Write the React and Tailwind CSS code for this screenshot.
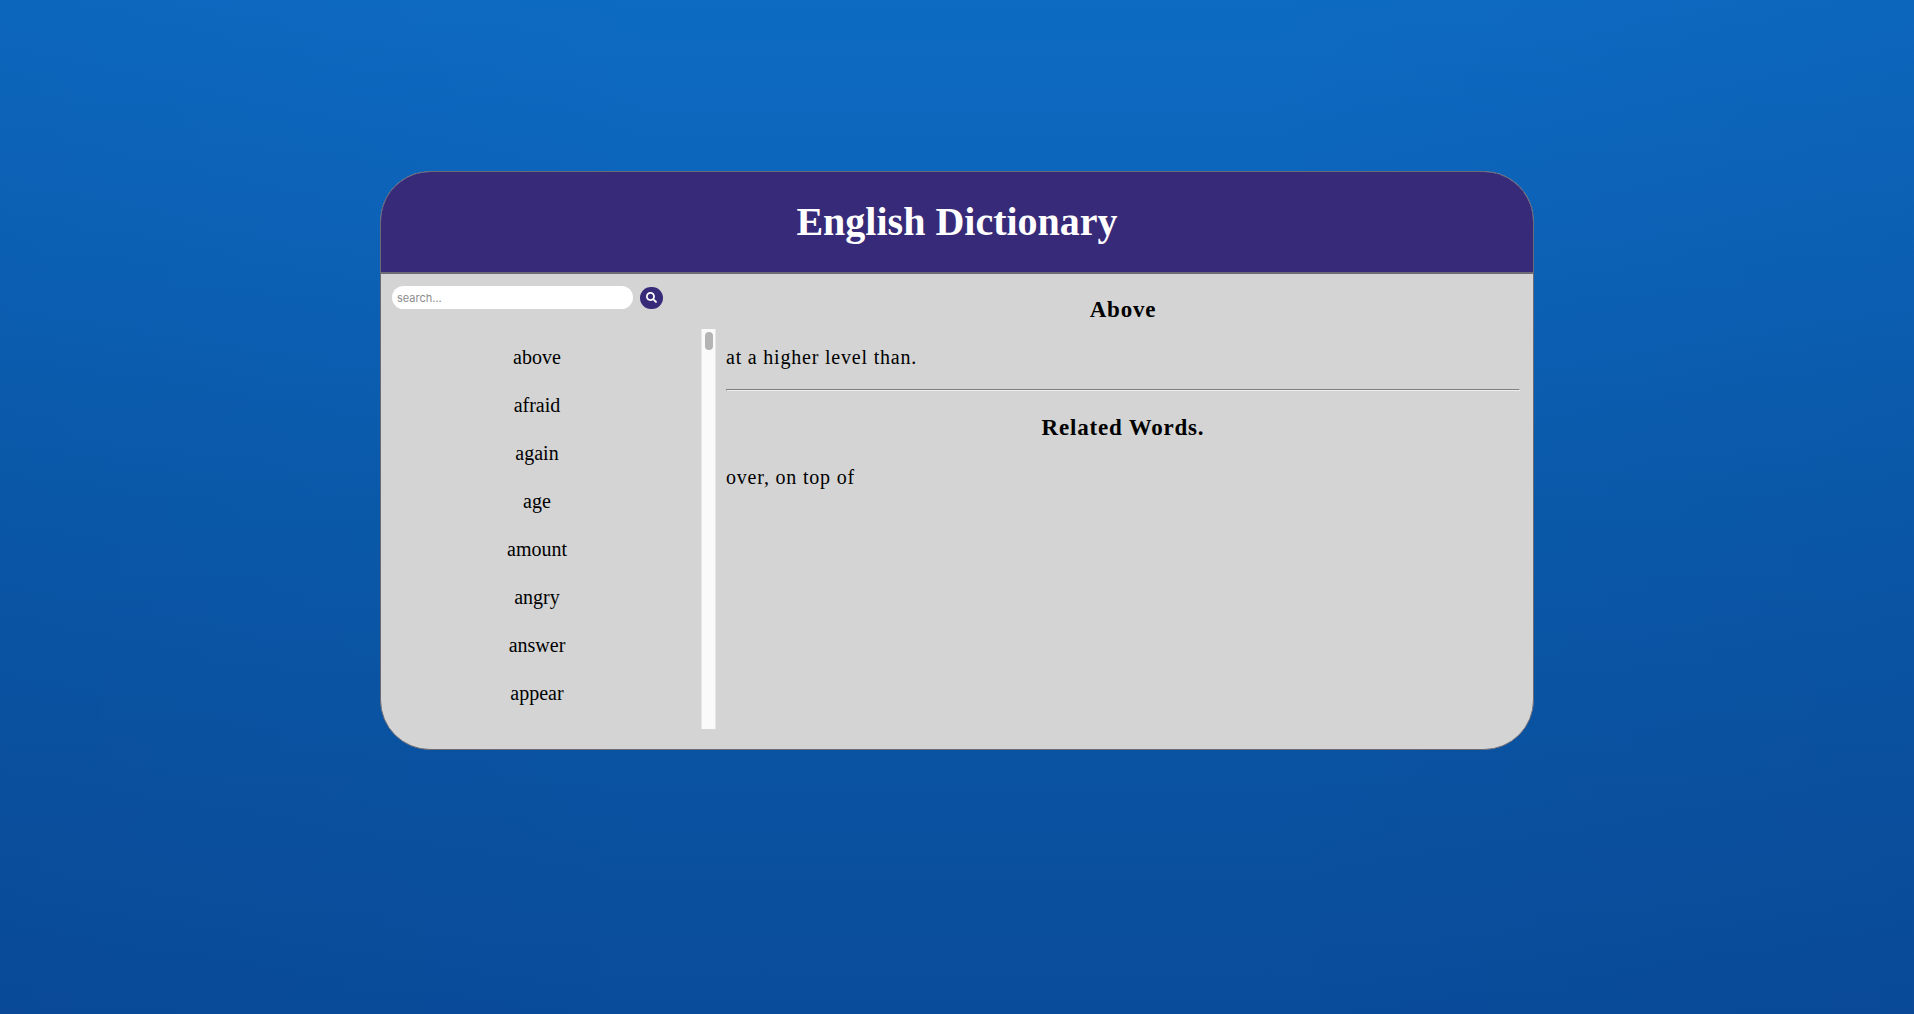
import { FaSearch } from "react-icons/fa";

const words = ["above", "afraid", "again", "age", "amount", "angry", "answer", "appear"];

function SearchBar() {
  return (
    <form className="flex items-center pl-[11px] pt-3" onSubmit={(e) => e.preventDefault()}>
      <input
        type="text"
        aria-label="Search words"
        placeholder="search..."
        className="h-[23px] w-[241px] rounded-full bg-white px-[5px] font-['Inter',sans-serif] text-[11px] text-black outline-none placeholder:text-[#8c8c8c]"
      />
      <button
        type="submit"
        aria-label="Search"
        className="ml-[7px] flex h-[22px] w-[23px] items-center justify-center rounded-full bg-[#372a78] text-white"
      >
        <FaSearch className="size-[11px]" />
      </button>
    </form>
  );
}

function WordList() {
  return (
    <div className="mt-5 flex h-[400px] overflow-hidden">
      <ul className="flex-1 pl-[11px] pr-[19px] pt-1">
        {words.map((word) => (
          <li key={word} className="py-3 text-center text-[20px] leading-6">
            <button type="button" className="cursor-pointer">{word}</button>
          </li>
        ))}
      </ul>
      <div className="w-[15px] border-x border-[#e6e6e6] bg-[#fafafa] pt-[3px]">
        <div className="mx-auto h-[18px] w-2 rounded-full bg-[#b4b4b4]" />
      </div>
    </div>
  );
}

function Definition() {
  return (
    <section className="flex-1 pl-[10px] pr-[13px] pt-[22px] tracking-wider">
      <h2 className="text-center text-[23px] font-bold leading-7">Above</h2>
      <p className="mt-[21px] text-[20px] leading-6">at a higher level than.</p>
      <hr className="mt-5 border border-b-[#eeeeee] border-l-[#808080] border-r-[#eeeeee] border-t-[#808080]" />
      <h2 className="mt-[23px] text-center text-[23px] font-bold leading-7">Related Words.</h2>
      <p className="mt-[23px] text-[20px] leading-6">over, on top of</p>
    </section>
  );
}

export default function App() {
  return (
    <div className="min-h-screen bg-[linear-gradient(to_right,rgba(4,30,90,0.06)_0%,rgba(4,30,90,0)_35%,rgba(4,30,90,0)_65%,rgba(4,30,90,0.06)_100%),linear-gradient(to_bottom,#0d6bc2_0%,#0c63b8_25%,#0a5aab_50%,#0a53a2_75%,#094c9b_100%)] pt-[171px] font-['Liberation_Serif',serif] text-black">
      <main className="mx-auto w-full max-w-[1154px] overflow-hidden rounded-[50px] border border-[#6b6b75] bg-[#d4d4d4]">
        <header className="border-b-2 border-[#6e6a78] bg-[#372a78] py-[26px]">
          <h1 className="text-center text-[40px] font-bold leading-[48px] text-white">English Dictionary</h1>
        </header>
        <div className="flex pb-5">
          <aside className="w-[335px] shrink-0">
            <SearchBar />
            <WordList />
          </aside>
          <Definition />
        </div>
      </main>
    </div>
  );
}
